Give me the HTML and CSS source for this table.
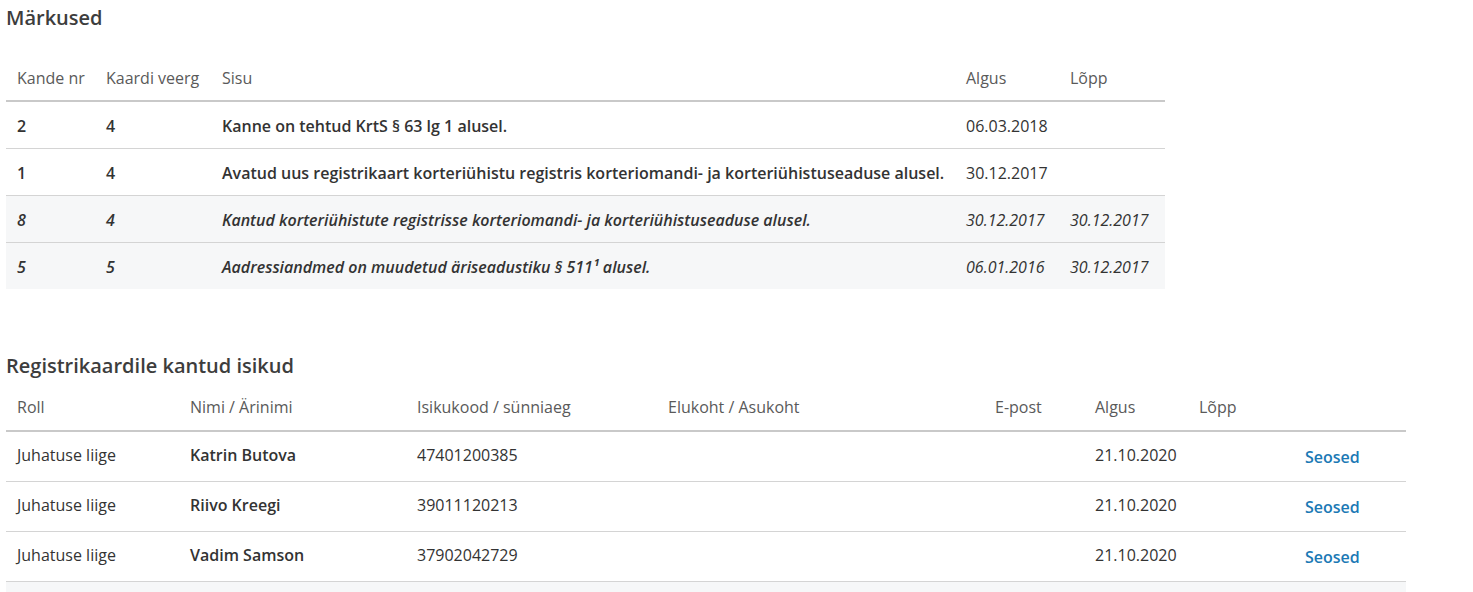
FILE: index.html
```html
<!DOCTYPE html>
<html lang="et">
<head>
<meta charset="utf-8">
<title>Registrikaart</title>
<link rel="stylesheet" href="styles.css">
</head>
<body>
<section class="section">
  <h2 class="title">Märkused</h2>
  <table class="tbl tbl-notes">
    <colgroup>
      <col class="c-nr"><col class="c-veerg"><col class="c-sisu"><col class="c-date"><col class="c-date2">
    </colgroup>
    <thead>
      <tr><th>Kande nr</th><th>Kaardi veerg</th><th>Sisu</th><th>Algus</th><th>Lõpp</th></tr>
    </thead>
    <tbody>
      <tr class="strong"><td>2</td><td>4</td><td>Kanne on tehtud KrtS § 63 lg 1 alusel.</td><td class="plain">06.03.2018</td><td class="plain"></td></tr>
      <tr class="strong"><td>1</td><td>4</td><td>Avatud uus registrikaart korteriühistu registris korteriomandi- ja korteriühistuseaduse alusel.</td><td class="plain">30.12.2017</td><td class="plain"></td></tr>
      <tr class="strong old"><td>8</td><td>4</td><td>Kantud korteriühistute registrisse korteriomandi- ja korteriühistuseaduse alusel.</td><td class="plain">30.12.2017</td><td class="plain">30.12.2017</td></tr>
      <tr class="strong old"><td>5</td><td>5</td><td>Aadressiandmed on muudetud äriseadustiku § 511¹ alusel.</td><td class="plain">06.01.2016</td><td class="plain">30.12.2017</td></tr>
    </tbody>
  </table>
</section>
<section class="section section-persons">
  <h2 class="title">Registrikaardile kantud isikud</h2>
  <table class="tbl tbl-persons">
    <colgroup>
      <col class="p-roll"><col class="p-nimi"><col class="p-kood"><col class="p-elu"><col class="p-epost"><col class="p-algus"><col class="p-lopp"><col class="p-seos">
    </colgroup>
    <thead>
      <tr><th>Roll</th><th>Nimi / Ärinimi</th><th>Isikukood / sünniaeg</th><th>Elukoht / Asukoht</th><th>E-post</th><th>Algus</th><th>Lõpp</th><th></th></tr>
    </thead>
    <tbody>
      <tr><td>Juhatuse liige</td><td class="name">Katrin Butova</td><td>47401200385</td><td></td><td></td><td>21.10.2020</td><td></td><td><a class="link" href="#">Seosed</a></td></tr>
      <tr><td>Juhatuse liige</td><td class="name">Riivo Kreegi</td><td>39011120213</td><td></td><td></td><td>21.10.2020</td><td></td><td><a class="link" href="#">Seosed</a></td></tr>
      <tr><td>Juhatuse liige</td><td class="name">Vadim Samson</td><td>37902042729</td><td></td><td></td><td>21.10.2020</td><td></td><td><a class="link" href="#">Seosed</a></td></tr>
      <tr class="old"><td>&nbsp;</td><td></td><td></td><td></td><td></td><td></td><td></td><td></td></tr>
    </tbody>
  </table>
</section>
</body>
</html>
```
FILE: styles.css
```css
html, body {
  margin: 0;
  padding: 0;
  background: #fff;
}
body {
  font-family: "Open Sans", "Noto Sans", sans-serif;
  font-size: 16px;
  line-height: 22px;
  color: #333;
  padding: 6px 6px 0 6px;
}
.title {
  margin: 0;
  font-size: 20px;
  line-height: 24px;
  font-weight: 600;
  color: #3d3d3d;
}
.tbl {
  border-collapse: collapse;
  table-layout: fixed;
}
.tbl th {
  text-align: left;
  font-weight: 400;
  color: #5a5a5a;
  padding: 13px 11px 11px 11px;
  border-bottom: 2px solid #c9c9c9;
  white-space: nowrap;
}
.tbl td {
  text-align: left;
  padding: 13px 11px 11px 11px;
  border-bottom: 1px solid #d4d4d4;
  vertical-align: middle;
  white-space: nowrap;
}
.tbl-notes {
  width: 1159px;
  margin-top: 24px;
}
.c-nr { width: 89px; }
.c-veerg { width: 116px; }
.c-sisu { width: 744px; }
.c-date { width: 104px; }
.c-date2 { width: 106px; }
.tbl-notes tr.strong td { font-weight: 600; }
.tbl-notes tr.strong td.plain { font-weight: 400; }
.tbl tr.old td {
  background: #f6f7f8;
  font-style: italic;
}
.tbl-notes tr:last-child td { border-bottom: none; }

.section-persons { margin-top: 65px; }
.tbl-persons {
  width: 1400px;
  margin-top: 6px;
}
.tbl-persons th {
  padding: 12px 11px 12px 11px;
}
.tbl-persons td {
  padding: 12px 11px 15px 11px;
}
.tbl-persons tr.old td { border-bottom: none; }
.p-roll { width: 173px; }
.p-nimi { width: 227px; }
.p-kood { width: 251px; }
.p-elu { width: 327px; }
.p-epost { width: 100px; }
.p-algus { width: 104px; }
.p-lopp { width: 106px; }
.p-seos { width: 112px; }
.tbl-persons td.name { font-weight: 600; }
.link {
  color: #1b79b5;
  font-weight: 600;
  font-size: 16px;
  text-decoration: none;
  position: relative;
  top: 2px;
}
```
